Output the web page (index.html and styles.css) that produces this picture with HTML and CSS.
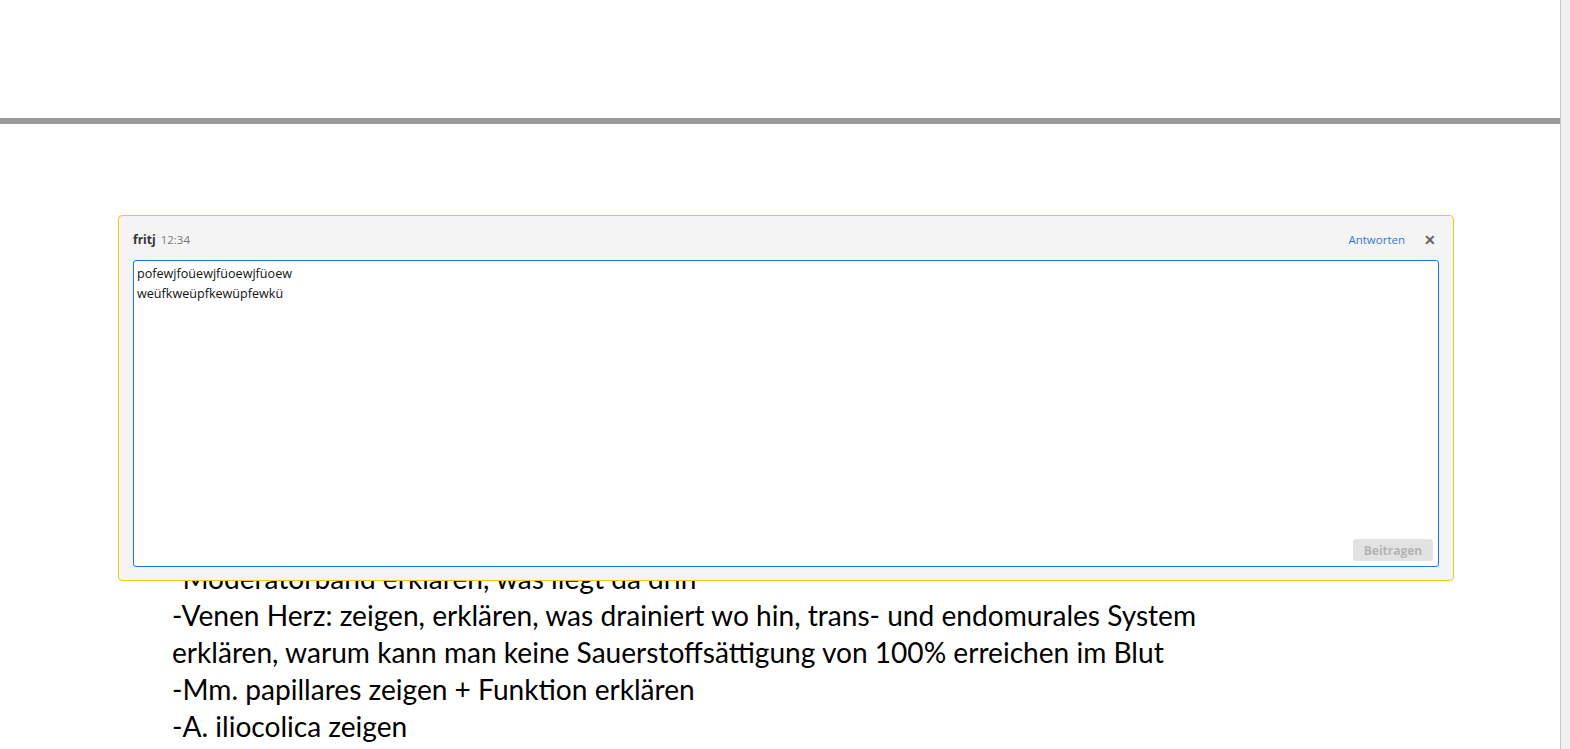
FILE: index.html
```html
<!DOCTYPE html>
<html lang="de">
<head>
<meta charset="utf-8">
<title>Kommentar</title>
<link rel="stylesheet" href="styles.css">
</head>
<body>
<div class="page">
  <div class="doc">
    <div class="doc-top"></div>
    <div class="doc-rule"></div>
    <div class="doc-content">
      <p>-Moderatorband erklären, was liegt da drin</p>
      <p>-Venen Herz: zeigen, erklären, was drainiert wo hin, trans- und endomurales System</p>
      <p>erklären, warum kann man keine Sauerstoffsättigung von 100% erreichen im Blut</p>
      <p>-Mm. papillares zeigen + Funktion erklären</p>
      <p>-A. iliocolica zeigen</p>
    </div>
  </div>
  <div class="scrollbar"></div>
</div>
<div class="comment">
  <div class="comment-head">
    <span class="author">fritj</span>
    <span class="time">12:34</span>
    <span class="spacer"></span>
    <a class="reply">Antworten</a>
    <span class="close">✕</span>
  </div>
  <div class="editor">
    <div class="editor-text">pofewjfoüewjfüoewjfüoew<br>weüfkweüpfkewüpfewkü</div>
    <div class="editor-foot"><button class="submit">Beitragen</button></div>
  </div>
</div>
</body>
</html>
```
FILE: styles.css
```css
html, body {
  margin: 0;
  padding: 0;
  background: #fff;
}
.page {
  display: flex;
  width: 1570px;
  height: 749px;
  overflow: hidden;
}
.doc {
  flex: 1;
  border-right: 1px solid #c6c6c6;
  background: #fff;
}
.doc-top {
  height: 118px;
}
.doc-rule {
  height: 6px;
  background: #9a9a9a;
}
.doc-content {
  padding: 436px 0 0 172px;
  font-family: Lato, "Liberation Sans", sans-serif;
  font-size: 28.1px;
  line-height: 37px;
  color: #000;
}
.doc-content p {
  margin: 0;
  white-space: nowrap;
}
.scrollbar {
  width: 9px;
  background: #f0f0f0;
}
.comment {
  position: absolute;
  left: 118px;
  top: 215px;
  box-sizing: border-box;
  width: 1336px;
  height: 366px;
  border: 1px solid #f2cc0c;
  border-radius: 4px;
  background: #f4f4f4;
  padding: 0 14px 13px 14px;
  display: flex;
  flex-direction: column;
  font-family: "Open Sans", "Noto Sans", sans-serif;
  font-size: 12px;
}
.comment-head {
  display: flex;
  align-items: center;
  height: 42px;
  padding: 2px 3px 0 0;
}
.author {
  font-weight: 700;
  color: #333;
  font-size: 12px;
}
.time {
  margin-left: 5px;
  color: #777;
  font-size: 11.5px;
}
.spacer {
  flex: 1;
}
.reply {
  color: #2f7bd6;
  font-size: 11.5px;
  cursor: pointer;
}
.close {
  margin-left: 19px;
  color: #666;
  font-size: 14px;
  font-weight: 700;
}
.editor {
  flex: 1;
  border: 1px solid #1a73e8;
  border-radius: 3px;
  background: #fff;
  display: flex;
  flex-direction: column;
  padding: 3px 5px 5px 3px;
}
.editor-text {
  flex: 1;
  color: #111;
  font-size: 12.6px;
  line-height: 20px;
}
.editor-foot {
  display: flex;
  justify-content: flex-end;
}
.submit {
  font-family: "Open Sans", "Noto Sans", sans-serif;
  font-size: 12px;
  font-weight: 700;
  color: #b4b4b4;
  background: #e2e2e2;
  border: none;
  border-radius: 3px;
  width: 80px;
  height: 22px;
  padding: 0;
}
```
